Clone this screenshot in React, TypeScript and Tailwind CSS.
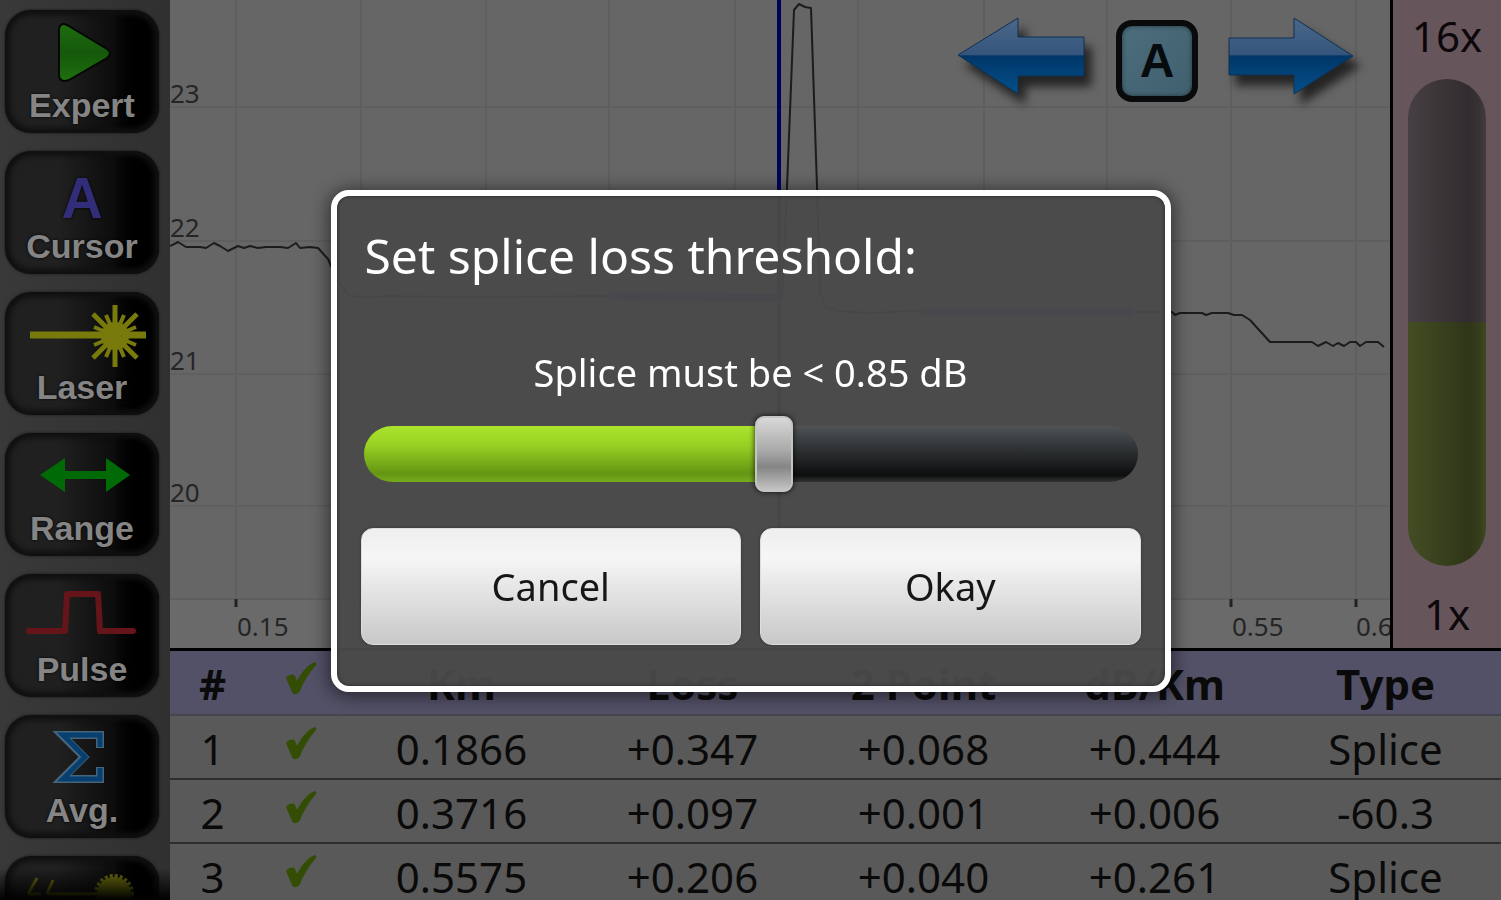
import React, { useState } from "react";

const MENU_ITEMS = [
  { label: "Expert", icon: "play" },
  { label: "Cursor", icon: "cursor" },
  { label: "Laser", icon: "laser" },
  { label: "Range", icon: "range" },
  { label: "Pulse", icon: "pulse" },
  { label: "Avg.", icon: "sigma" },
];

const EVENT_HEADERS = ["Km", "Loss", "2 Point", "dB/Km", "Type"];

const EVENTS = [
  ["0.1866", "+0.347", "+0.068", "+0.444", "Splice"],
  ["0.3716", "+0.097", "+0.001", "+0.006", "-60.3"],
  ["0.5575", "+0.206", "+0.040", "+0.261", "Splice"],
];

const GRID_X = [66, 191, 316, 439, 565, 688, 814, 937, 1061, 1186];
const GRID_Y = [107, 241, 374, 506, 599];
const Y_LABELS = ["23", "22", "21", "20"];
const X_LABELS = [
  { x: 66, label: "0.15" },
  { x: 1061, label: "0.55" },
  { x: 1185, label: "0.6" },
];

const TRACE =
  "0,246 8,242 16,247 30,247 36,248 44,243 50,246 58,251 68,246 74,248 80,246 88,248 96,247 110,247 118,248 126,243 130,248 140,247 148,248 158,259 168,282 180,296 200,297 220,296 300,297 420,296 612,298 617,187 624,10 629,4 635,7 641,8 647,187 650,292 656,308 668,311 700,313 740,311 960,312 1002,312 1005,315 1010,313 1032,313 1036,315 1042,313 1058,313 1064,315 1072,315 1080,320 1100,342 1142,342 1148,346 1156,342 1163,346 1168,343 1174,346 1180,342 1186,342 1190,346 1196,342 1208,342 1214,347";

// Rays of the laser burst: long ones first, then the short ones between them
const LONG_RAYS = ["M110 13V75", "M88 22L132 66", "M132 22L88 66"];
const SHORT_RAYS = ["M101 23L119 65", "M119 23L101 65", "M89 35L131 53", "M89 53L131 35"];

const MenuIcon: React.FC<{ name: string }> = ({ name }) => (
  <svg className="block w-full h-[78px] shrink-0" viewBox="0 0 154 78" aria-hidden="true">
    {name === "play" && (
      <>
        <defs>
          <linearGradient id="play-fill" x1="0" y1="0" x2="0" y2="1">
            <stop offset="0" stopColor="#206c11" />
            <stop offset="0.5" stopColor="#15580a" />
            <stop offset="1" stopColor="#207010" />
          </linearGradient>
        </defs>
        <path d="M54 19Q55 12 62 15L102 39Q108 43 102 48L64 70Q55 73 54 66Z" fill="url(#play-fill)" stroke="#030803" strokeWidth="2" />
      </>
    )}
    {name === "cursor" && (
      <text x="77" y="67" textAnchor="middle" fontSize="57" fontWeight="700" fill="#322d78">A</text>
    )}
    {name === "laser" && (
      <g stroke="#787a0c" fill="none">
        <path d="M25 43H141" strokeWidth="7" />
        {LONG_RAYS.map((d) => <path key={d} d={d} strokeWidth="5" />)}
        {SHORT_RAYS.map((d) => <path key={d} d={d} strokeWidth="4" />)}
        <circle cx="110" cy="44" r="14" fill="#787a0c" stroke="none" />
      </g>
    )}
    {name === "range" && (
      <path d="M35 42L60 25V38H101V25L125 42L101 59V46H60V59Z" fill="#006b06" />
    )}
    {name === "pulse" && (
      <path d="M24 57H60L62 20H93L95 57H128" fill="none" stroke="#651519" strokeWidth="6" strokeLinejoin="round" strokeLinecap="round" />
    )}
    {name === "sigma" && (
      <g fill="none" strokeLinejoin="miter" strokeMiterlimit="6">
        <path d="M95 33V20H57L79 42L57 64H95V52" stroke="#46647a" strokeWidth="8" />
        <path d="M95 32V20H58L80 42L58 64H95V53" stroke="#063f70" strokeWidth="5" />
      </g>
    )}
    {name === "lamp" && (
      <g>
        <path d="M23 38L32 22M23 38H36M42 38L48 24M42 38H94" fill="none" stroke="#6c6e0b" strokeWidth="3" />
        <circle cx="109" cy="38" r="17" fill="#6c6e0f" />
        <circle cx="109" cy="38" r="18" fill="none" stroke="#6c6e0f" strokeWidth="4" strokeDasharray="3 2" />
      </g>
    )}
  </svg>
);

const MenuButton: React.FC<{ label?: string; icon: string }> = ({ label, icon }) => (
  <button
    aria-label={label ?? "Lamp"}
    className="flex w-full h-[123px] shrink-0 flex-col items-center rounded-[26px] bg-linear-to-r from-[#202020] from-35% via-[#0d0d0d] via-70% to-black to-92% shadow-[inset_0_0_5px_5px_#101010,0_0_3px_#181818] text-[34px] leading-[34px] font-bold text-[#858585] [text-shadow:0_0_3px_#000]"
  >
    <MenuIcon name={icon} />
    {label && <span>{label}</span>}
  </button>
);

const Check: React.FC = () => (
  <svg className="mx-auto w-8 h-9 -translate-y-1" viewBox="0 0 32 36" aria-hidden="true">
    <path d="M1 18C3 15 8 13 10 16L12 21C16 13 22 5 30 2Q32 3 31 5C24 13 19 21 15 31C13 35 8 35 7 32Z" fill="#344d05" />
  </svg>
);

const ArrowIcon: React.FC<{ flip?: boolean }> = ({ flip }) => (
  <svg
    className="block h-20 overflow-visible drop-shadow-[7px_10px_5px_rgba(0,0,0,0.65)]"
    viewBox={flip ? "3 0 125 80" : "0 0 128 80"}
    aria-hidden="true"
  >
    <defs>
      <linearGradient id="arrow-fill" x1="0" y1="0" x2="0" y2="1">
        <stop offset="0" stopColor="#496789" />
        <stop offset="0.48" stopColor="#36557c" />
        <stop offset="0.5" stopColor="#003668" />
        <stop offset="1" stopColor="#04508b" />
      </linearGradient>
    </defs>
    <path
      d={flip ? "M127 40L68 2V22H3V59H68V78Z" : "M1 39L61 2V21H127V60H61V78Z"}
      fill="url(#arrow-fill)"
      stroke="#10304f"
      strokeWidth="1"
    />
  </svg>
);

const TraceChart: React.FC = () => (
  <div className="relative flex-1 min-w-0 overflow-hidden bg-[#666]">
    <svg className="block w-full h-full" viewBox="0 0 1220 648" preserveAspectRatio="xMinYMin slice" role="img" aria-label="Trace">
      <rect y="600" width="1220" height="48" fill="#6a6a6a" />
      <g stroke="#5f5f5f" strokeWidth="2">
        {GRID_X.map((x) => <path key={x} d={`M${x} 0V600`} />)}
        {GRID_Y.map((y) => <path key={y} d={`M0 ${y}H1220`} />)}
      </g>
      <g fill="#252525" fontSize="26">
        {Y_LABELS.map((label, i) => <text key={label} x="0" y={GRID_Y[i] - 4}>{label}</text>)}
        {X_LABELS.map(({ x, label }) => <text key={label} x={x + 1} y="636">{label}</text>)}
      </g>
      {GRID_X.map((x) => <path key={x} d={`M${x} 599V607`} stroke="#222" strokeWidth="3" />)}
      <polyline points={TRACE} fill="none" stroke="#1c1c1c" strokeWidth="2" strokeLinejoin="round" />
      <path d="M609 0V600" stroke="#00005e" strokeWidth="4" />
      <path d="M440 296L608 298M750 312H962" stroke="#1c1c70" strokeWidth="8" />
    </svg>

    {/* Cursor controls */}
    <div className="absolute top-4 right-9 flex items-start gap-[31px]">
      <button aria-label="Move cursor left"><ArrowIcon /></button>
      <button className="mt-1 size-[82px] rounded-2xl border-6 border-[#080a0b] bg-linear-to-br from-[#4c6d7c] to-[#41606f] font-['Liberation_Sans',sans-serif] text-5xl font-bold text-[#070b0d] shadow-[inset_0_0_4px_#22343c]">
        A
      </button>
      <button aria-label="Move cursor right"><ArrowIcon flip /></button>
    </div>
  </div>
);

const ZoomBar: React.FC = () => (
  <aside className="flex w-[111px] shrink-0 flex-col items-center border-l-3 border-black bg-[#66565c] text-[42px] leading-[72px] text-[#0d070a]">
    <label htmlFor="zoom" className="h-[79px]">16x</label>
    <input
      id="zoom"
      type="range"
      min={1}
      max={16}
      defaultValue={8}
      className="w-[78px] min-h-0 flex-1 appearance-none overflow-hidden rounded-full [writing-mode:vertical-lr] [direction:rtl] bg-[linear-gradient(to_right,#00000000,#0000004d_78%,#00000033_92%,#0000000d),linear-gradient(to_bottom,#463f43_50%,#434d23_50%)] [&::-webkit-slider-thumb]:appearance-none [&::-webkit-slider-thumb]:opacity-0"
    />
    <span className="h-[82px] pt-3">1x</span>
  </aside>
);

const EventTable: React.FC = () => (
  <table className="w-full table-fixed border-t-3 border-black text-center text-[42px] leading-[58px] text-[#0a0a0a]">
    <thead>
      <tr className="h-[65px] border-b-2 border-[#45454f] bg-[#535167]">
        <th className="w-[85px] pt-1">#</th>
        <th className="w-[91px]" aria-label="Passed"><Check /></th>
        {EVENT_HEADERS.map((header) => <th key={header} className="pt-1 font-bold">{header}</th>)}
      </tr>
    </thead>
    <tbody>
      {EVENTS.map((row, i) => (
        <tr key={i} className="h-16 border-b-2 border-[#2e2e2e] bg-[#595959]">
          <td className="pt-1">{i + 1}</td>
          <td><Check /></td>
          {row.map((cell, j) => <td key={j} className="pt-1">{cell}</td>)}
        </tr>
      ))}
    </tbody>
  </table>
);

const DialogButton: React.FC<{ children: React.ReactNode }> = ({ children }) => (
  <button className="h-[117px] flex-1 rounded-xl border border-[#ddd] bg-linear-to-b from-[#eee] via-[#f6f6f6] via-25% to-[#c8c8c8] text-[38px] text-[#161616] shadow-[0_0_3px_#333]">
    {children}
  </button>
);

const ThresholdDialog: React.FC = () => {
  const [threshold, setThreshold] = useState(0.85);
  const max = 1.6;

  return (
    <div className="fixed inset-0 flex items-center justify-center pb-[19px]">
      <div
        role="dialog"
        aria-labelledby="threshold-title"
        className="w-full max-w-[840px] rounded-[18px] border-6 border-white bg-[#4a4a4a]/95 px-6 pt-7 pb-[41px] text-white shadow-[0_2px_16px_4px_rgba(0,0,0,0.45),inset_0_0_3px_1px_#333]"
      >
        <h1 id="threshold-title" className="px-1 text-[48px] leading-[64px]">Set splice loss threshold:</h1>
        <label htmlFor="threshold" className="mt-[58px] block text-center text-[38px] leading-[52px]">
          Splice must be &lt; {threshold.toFixed(2)} dB
        </label>
        <div className="mt-[18px] px-[3px]">
          <input
            id="threshold"
            type="range"
            min={0}
            max={max}
            step={0.05}
            value={threshold}
            onChange={(e) => setThreshold(Number(e.target.value))}
            style={{ "--fill": `${(threshold / max) * 100}%` } as React.CSSProperties}
            className="block h-[76px] w-full appearance-none bg-transparent [&::-webkit-slider-runnable-track]:h-14 [&::-webkit-slider-runnable-track]:rounded-full [&::-webkit-slider-runnable-track]:bg-[linear-gradient(to_bottom,#abe42d,#98d023_35%,#659514_85%,#76ab1c),linear-gradient(to_bottom,#505355,#303335_40%,#0c0d0e_88%,#333)] [&::-webkit-slider-runnable-track]:bg-[length:var(--fill)_100%,100%_100%] [&::-webkit-slider-runnable-track]:bg-no-repeat [&::-webkit-slider-thumb]:-mt-[10px] [&::-webkit-slider-thumb]:h-[76px] [&::-webkit-slider-thumb]:w-[38px] [&::-webkit-slider-thumb]:appearance-none [&::-webkit-slider-thumb]:rounded-[9px] [&::-webkit-slider-thumb]:border-2 [&::-webkit-slider-thumb]:border-[#c4c4c4] [&::-webkit-slider-thumb]:bg-[linear-gradient(to_bottom,#d8d8d8,#aaa_45%,#858585_68%,#c4c4c4)] [&::-webkit-slider-thumb]:shadow-[0_0_5px_1px_rgba(0,0,0,0.6)]"
          />
        </div>
        <div className="mt-9 flex gap-[19px]">
          <DialogButton>Cancel</DialogButton>
          <DialogButton>Okay</DialogButton>
        </div>
      </div>
    </div>
  );
};

export default function App() {
  return (
    <div className="flex h-screen overflow-hidden bg-[#595959] font-['Noto_Sans','Open_Sans',sans-serif]">
      {/* Side menu */}
      <nav className="relative flex w-[170px] shrink-0 flex-col gap-[18px] overflow-hidden bg-linear-to-r from-[#393939] to-[#303030] pt-[10px] pr-[11px] pl-[5px] font-['Liberation_Sans',sans-serif]">
        {MENU_ITEMS.map((item) => <MenuButton key={item.label} label={item.label} icon={item.icon} />)}
        <MenuButton icon="lamp" />
        <div className="absolute inset-x-0 bottom-0 h-8 bg-linear-to-b from-transparent to-black"></div>
      </nav>

      {/* Trace and event list */}
      <main className="flex min-w-0 flex-1 flex-col">
        <div className="flex h-[72vh] shrink-0">
          <TraceChart />
          <ZoomBar />
        </div>
        <EventTable />
      </main>

      <ThresholdDialog />
    </div>
  );
}
